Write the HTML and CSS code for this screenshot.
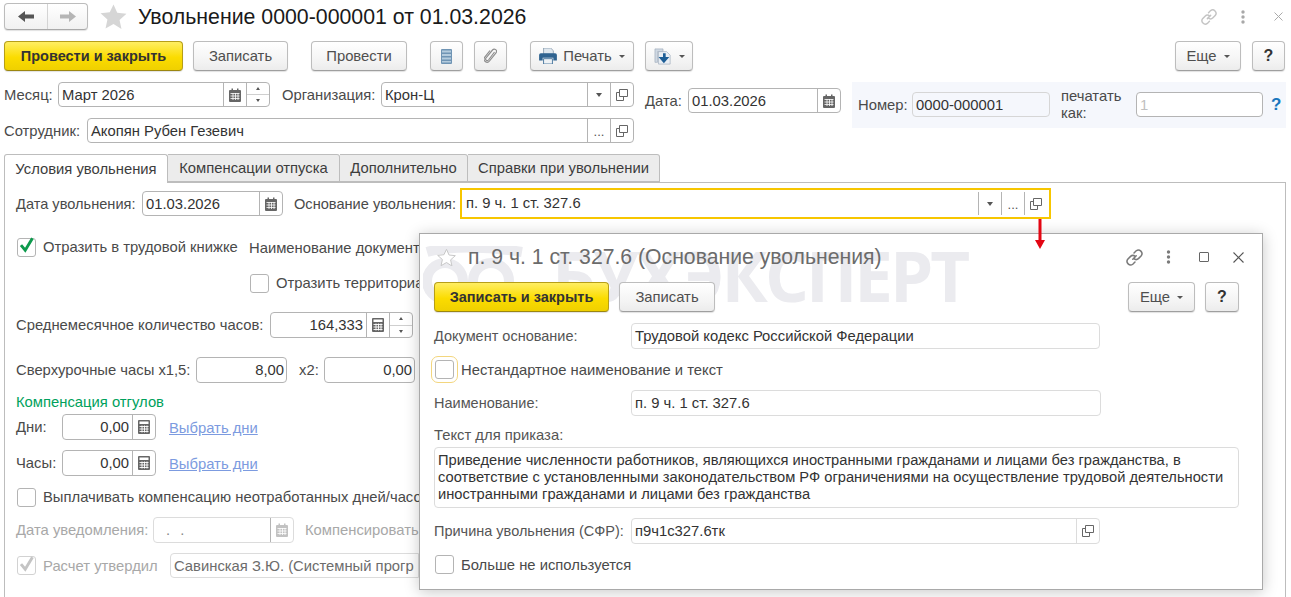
FILE: index.html
```html
<!DOCTYPE html>
<html lang="ru">
<head>
<meta charset="utf-8">
<title>Увольнение 0000-000001</title>
<link rel="stylesheet" href="styles.css">
</head>
<body>
<svg class="defs" width="0" height="0" aria-hidden="true">
  <symbol id="i-cal" viewBox="0 0 12 14"><path d="M1 2h1.5V0.5h1.5V2h4V0.5h1.5V2H11a1 1 0 0 1 1 1v10a1 1 0 0 1-1 1H1a1 1 0 0 1-1-1V3a1 1 0 0 1 1-1z" fill="currentColor"/><path d="M1.5 5.5h9M1.5 8h9M1.5 10.5h9M4 5v7M6.5 5v7M9 5v7" stroke="#fff" stroke-width=".8" fill="none"/></symbol>
  <symbol id="i-calc" viewBox="0 0 12 14"><rect width="12" height="14" rx="1" fill="currentColor"/><rect x="1.5" y="1.5" width="9" height="2.5" fill="#fff"/><path d="M1.5 6.5h9M1.5 9h9M1.5 11.5h9M4 5.5v7M6.5 5.5v7M9 5.5v7" stroke="#fff" stroke-width=".9" fill="none"/></symbol>
  <symbol id="i-open" viewBox="0 0 12 12"><path d="M3.5.5h8v7h-8z" fill="none" stroke="currentColor"/><path d="M3.5 3.5H.5v8h7V8" fill="none" stroke="currentColor"/></symbol>
  <symbol id="i-link" viewBox="0 0 20 20"><path d="M8.2 11.8l3.6-3.6M9.5 5.2l2.3-2.3a3.8 3.8 0 0 1 5.3 5.3l-2.7 2.7a3.8 3.8 0 0 1-5.3 0M10.5 14.8l-2.3 2.3a3.8 3.8 0 0 1-5.3-5.3l2.7-2.7a3.8 3.8 0 0 1 5.3 0" fill="none" stroke="currentColor" stroke-width="1.6" stroke-linecap="round"/></symbol>
  <symbol id="i-dots" viewBox="0 0 4 14"><circle cx="2" cy="2" r="1.7" fill="currentColor"/><circle cx="2" cy="7" r="1.7" fill="currentColor"/><circle cx="2" cy="12" r="1.7" fill="currentColor"/></symbol>
  <symbol id="i-check" viewBox="0 0 20 20"><path d="M3.5 9.5l5 6L17 1.5" fill="none" stroke="currentColor" stroke-width="3.4"/></symbol>
  <symbol id="i-star" viewBox="0 0 28 26"><path d="M14 .5l3.9 8.7 9.6 1-7.2 6.4 2 9.4L14 20.7l-8.3 4.8 2-9.4L.5 9.7l9.6-1z"/></symbol>
</svg>

<header class="top-bar">
  <div class="nav-box">
    <button class="nav-btn nav-btn-back"><svg width="16" height="11" viewBox="0 0 16 11"><path d="M0 5.500L7 0v3.500h9v4H7V11z" fill="#555"/></svg></button>
    <button class="nav-btn nav-btn-next"><svg width="16" height="11" viewBox="0 0 16 11"><path d="M16 5.500L9 0v3.500H0v4h9V11z" fill="#b5b5b5"/></svg></button>
  </div>
  <svg class="star-big"><use href="#i-star"/></svg>
  <h1 class="doc-title">Увольнение 0000-000001 от 01.03.2026</h1>
  <div class="win-icons">
    <svg class="ic-link"><use href="#i-link"/></svg>
    <svg class="ic-dots"><use href="#i-dots"/></svg>
    <svg class="ic-close" viewBox="0 0 9 9"><path d="M.5.5l8 8M8.500.5l-8 8" stroke="#aaa" fill="none"/></svg>
  </div>
</header>

<div class="toolbar">
  <button class="btn btn-main w-post-close">Провести и закрыть</button>
  <button class="btn w-save">Записать</button>
  <button class="btn w-post">Провести</button>
  <button class="btn btn-icon gap-23"><svg width="11" height="15" viewBox="0 0 11 15"><rect width="11" height="15" rx="1" fill="#6f94b4"/><path d="M1 1.500h9v2H1zM1 5h9v2H1zM1 8.500h9v2H1zM1 12h9v1.500H1z" fill="#b4cbdd"/></svg></button>
  <button class="btn btn-icon gap-11"><svg width="13" height="16" viewBox="0 0 13 16"><path d="M10.500 4L4.500 12a1.600 1.600 0 0 1-2.500-2L8.500 2a2.200 2.200 0 0 1 3.500 2.800L5.500 13a3 3 0 0 1-4.700-3.800L6 2.500" fill="none" stroke="#8d8d8d" stroke-width="1.200"/></svg></button>
  <button class="btn w-print gap-23">
    <svg width="18" height="16" viewBox="0 0 20 18"><path d="M5 0h8l3 3v4H5z" fill="#dfe7ee" stroke="#7a8fa3" stroke-width=".8"/><path d="M2 6h16a2 2 0 0 1 2 2v6h-4v-3H4v3H0V8a2 2 0 0 1 2-2z" fill="#2f6390"/><path d="M5 12h10v6H5z" fill="#eef2f5" stroke="#2f6390" stroke-width=".9"/></svg>
    <span>Печать</span><i class="caret"></i>
  </button>
  <button class="btn w-export gap-11">
    <svg width="18" height="17" viewBox="0 0 20 19"><path d="M1 1h9v3H4v12H1z" fill="#cfd8e2" stroke="#9aa9b8" stroke-width=".7"/><path d="M5 4h9l4 4v10H5z" fill="#e9eef4" stroke="#9aa9b8" stroke-width=".7"/><path d="M10 6h3v4h4l-6 7-6-7h5z" fill="#1d5e96"/></svg>
    <i class="caret"></i>
  </button>
  <div class="toolbar-end">
    <button class="btn w-more">Еще<i class="caret"></i></button>
    <button class="btn btn-help">?</button>
  </div>
</div>

<section class="doc-fields">
  <div class="doc-left">
    <div class="row">
      <label class="lbl w-lbl-month">Месяц:</label>
      <div class="field w-month"><span class="val">Март 2026</span><span class="fbtn"><svg class="ic-cal"><use href="#i-cal"/></svg></span><span class="spin"><i class="up"></i><i class="down"></i></span></div>
      <label class="lbl w-lbl-org">Организация:</label>
      <div class="field w-org"><span class="val">Крон-Ц</span><span class="fbtn"><i class="caret-sm"></i></span><span class="fbtn"><svg class="ic-open"><use href="#i-open"/></svg></span></div>
    </div>
    <div class="row">
      <label class="lbl w-lbl-emp">Сотрудник:</label>
      <div class="field w-emp"><span class="val">Акопян Рубен Гезевич</span><span class="fbtn dots">...</span><span class="fbtn"><svg class="ic-open"><use href="#i-open"/></svg></span></div>
    </div>
  </div>
  <div class="row date-group">
    <label class="lbl w-lbl-date">Дата:</label>
    <div class="field w-date"><span class="val">01.03.2026</span><span class="fbtn"><svg class="ic-cal"><use href="#i-cal"/></svg></span></div>
  </div>
  <div class="number-panel">
    <label class="lbl w-lbl-num">Номер:</label>
    <div class="field field-ro w-num"><span class="val">0000-000001</span></div>
    <label class="lbl lbl-wrap">печатать как:</label>
    <div class="field w-printas"><span class="val val-muted">1</span></div>
    <span class="hint">?</span>
  </div>
</section>

<nav class="tabs">
  <span class="tab tab-active w-tab1">Условия увольнения</span>
  <span class="tab w-tab2">Компенсации отпуска</span>
  <span class="tab w-tab3">Дополнительно</span>
  <span class="tab w-tab4">Справки при увольнении</span>
</nav>

<main class="tab-panel">
  <div class="row">
    <label class="lbl w-lbl-dismiss">Дата увольнения:</label>
    <div class="field w-dismiss"><span class="val">01.03.2026</span><span class="fbtn"><svg class="ic-cal"><use href="#i-cal"/></svg></span></div>
    <label class="lbl w-lbl-reason">Основание увольнения:</label>
    <div class="field field-hl w-reason"><span class="val">п. 9 ч. 1 ст. 327.6</span><span class="fbtn"><i class="caret-sm"></i></span><span class="fbtn dots">...</span><span class="fbtn"><svg class="ic-open"><use href="#i-open"/></svg></span></div>
  </div>

  <div class="row-check mt-21">
    <span class="check"><svg class="tick"><use href="#i-check"/></svg></span>
    <span class="check-lbl w-lbl-book">Отразить в трудовой книжке</span>
    <span class="lbl w-lbl-docname">Наименование документа</span>
  </div>
  <div class="row-check mt-16 indent-territory">
    <span class="check"></span>
    <span class="check-lbl">Отразить территориальные условия</span>
  </div>

  <div class="row row-26 mt-19">
    <label class="lbl w-lbl-avg">Среднемесячное количество часов:</label>
    <div class="field w-avg"><span class="val num">164,333</span><span class="fbtn"><svg class="ic-calc"><use href="#i-calc"/></svg></span><span class="spin"><i class="up"></i><i class="down"></i></span></div>
  </div>
  <div class="row row-26 mt-19">
    <label class="lbl w-lbl-over">Сверхурочные часы х1,5:</label>
    <div class="field w-over"><span class="val num">8,00</span></div>
    <label class="lbl w-lbl-x2">х2:</label>
    <div class="field w-over"><span class="val num">0,00</span></div>
  </div>

  <div class="group-title">Компенсация отгулов</div>
  <div class="row row-26 mt-4">
    <label class="lbl w-lbl-days">Дни:</label>
    <div class="field w-days"><span class="val num">0,00</span><span class="fbtn"><svg class="ic-calc"><use href="#i-calc"/></svg></span></div>
    <a class="pick" href="#">Выбрать дни</a>
  </div>
  <div class="row row-26 mt-10">
    <label class="lbl w-lbl-days">Часы:</label>
    <div class="field w-days"><span class="val num">0,00</span><span class="fbtn"><svg class="ic-calc"><use href="#i-calc"/></svg></span></div>
    <a class="pick" href="#">Выбрать дни</a>
  </div>

  <div class="row-check mt-11">
    <span class="check"></span>
    <span class="check-lbl">Выплачивать компенсацию неотработанных дней/часов</span>
  </div>

  <div class="row row-26 mt-10">
    <label class="lbl lbl-off w-lbl-notice">Дата уведомления:</label>
    <div class="field field-off w-dismiss"><span class="val val-dots">. .</span><span class="fbtn"><svg class="ic-cal ic-off"><use href="#i-cal"/></svg></span></div>
    <label class="lbl lbl-off w-lbl-comp">Компенсировать</label>
  </div>
  <div class="row mt-10">
    <span class="check check-off"><svg class="tick tick-off"><use href="#i-check"/></svg></span>
    <span class="check-lbl lbl-off w-lbl-appr">Расчет утвердил</span>
    <div class="field field-off field-ro-off w-appr"><span class="val val-clip">Савинская З.Ю. (Системный программист)</span></div>
  </div>
</main>

<svg class="arrow" width="10" height="31" viewBox="0 0 10 31"><path d="M3.500 0h3v21H10l-5 9-5-9h3.500z" fill="#e30613"/></svg>

<aside class="dialog">
  <div class="watermark" aria-hidden="true">
    <svg class="wm-owl" width="105" height="60" viewBox="0 0 105 60"><g fill="none" stroke="#ebebef" stroke-width="10"><circle cx="22" cy="35" r="18"/><circle cx="68" cy="35" r="18"/><path d="M4 6c20-6 60-6 95 0"/></g></svg>
    <span class="wm-text">БУХЭКСПЕРТ</span>
  </div>
  <div class="dlg-head">
    <svg class="star-sm"><use href="#i-star"/></svg>
    <h2 class="dlg-title">п. 9 ч. 1 ст. 327.6 (Основание увольнения)</h2>
    <div class="dlg-icons">
      <svg class="dlg-link"><use href="#i-link"/></svg>
      <svg class="dlg-dots"><use href="#i-dots"/></svg>
      <span class="dlg-max"></span>
      <svg class="dlg-close" viewBox="0 0 11 11"><path d="M.5.5l10 10M10.500.5l-10 10" stroke="#555" fill="none" stroke-width="1.100"/></svg>
    </div>
  </div>
  <div class="dlg-toolbar">
    <button class="btn btn-main w-save-close">Записать и закрыть</button>
    <button class="btn w-save-sm">Записать</button>
    <div class="toolbar-end">
      <button class="btn w-more-sm">Еще<i class="caret"></i></button>
      <button class="btn btn-help btn-help-dlg">?</button>
    </div>
  </div>
  <div class="dlg-row mt-11">
    <label class="dlg-lbl">Документ основание:</label>
    <div class="field field-light w-dlg"><span class="val">Трудовой кодекс Российской Федерации</span></div>
  </div>
  <div class="row-check row-dlg-check mt-11">
    <span class="check check-focus"></span>
    <span class="check-lbl">Нестандартное наименование и текст</span>
  </div>
  <div class="dlg-row mt-11">
    <label class="dlg-lbl">Наименование:</label>
    <div class="field field-light w-dlg-name"><span class="val">п. 9 ч. 1 ст. 327.6</span></div>
  </div>
  <div class="dlg-caption">Текст для приказа:</div>
  <div class="memo">Приведение численности работников, являющихся иностранными гражданами и лицами без гражданства, в соответствие с установленными законодательством РФ ограничениями на осуществление трудовой деятельности иностранными гражданами и лицами без гражданства</div>
  <div class="dlg-row mt-10">
    <label class="dlg-lbl">Причина увольнения (СФР):</label>
    <div class="field field-light w-dlg"><span class="val">п9ч1с327.6тк</span><span class="fbtn fbtn-light"><svg class="ic-open"><use href="#i-open"/></svg></span></div>
  </div>
  <div class="row-check row-dlg-check mt-11">
    <span class="check"></span>
    <span class="check-lbl">Больше не используется</span>
  </div>
</aside>
</body>
</html>
```
FILE: styles.css
```css
* { box-sizing: border-box; }
html, body { margin: 0; height: 597px; overflow: hidden; background: #fff; }
body { position: relative; padding-top: 3px; font: 14.800px/16px "Liberation Sans", Arial, sans-serif; color: #4a4a4a; }
.defs { position: absolute; }
button { font: inherit; color: inherit; padding: 0; }
h1, h2 { margin: 0; font-weight: 400; }

/* top bar */
.top-bar { display: flex; align-items: center; height: 27px; padding: 0 5px 0 4px; }
.nav-box { display: flex; width: 84px; height: 27px; border: 1px solid #bcbcbc; border-bottom-color: #a9a9a9; border-radius: 4px; background: linear-gradient(#fff, #f1f1f1); box-shadow: 0 1px 1px rgba(0,0,0,.12); }
.nav-btn { border: 0; background: none; display: flex; align-items: center; justify-content: center; }
.nav-btn-back { width: 42px; }
.nav-btn-next { flex: 1; border-left: 1px solid #d4d4d4; }
.star-big { width: 27px; height: 25px; margin: 0 0 0 12px; fill: #d6d6d6; }
.doc-title { margin: 0 0 0 11px; font-size: 21.300px; line-height: 26px; color: #1a1a1a; white-space: nowrap; }
.win-icons { margin-left: auto; display: flex; align-items: center; color: #c4c4c4; }
.ic-link { width: 18px; height: 18px; }
.ic-dots { width: 4px; height: 14px; margin-left: 23px; color: #a8a8a8; }
.ic-close { width: 9px; height: 9px; margin-left: 29px; margin-right: 3px; }

/* toolbars and buttons */
.toolbar { display: flex; height: 30px; margin: 11px 6px 0 4px; }
.btn { display: inline-flex; align-items: center; justify-content: center; height: 30px; border: 1px solid #bdbdbd; border-bottom-color: #9f9f9f; border-radius: 4px; background: linear-gradient(#fff, #f3f3f3 70%, #ececec); box-shadow: 0 1px 1px rgba(0,0,0,.12); color: #4f4f4f; white-space: nowrap; }
.btn-main { background: linear-gradient(#ffee62, #fbdc00 55%, #efd000); border-color: #b69e18; border-bottom-color: #9b8610; color: #333; font-size: 14.500px; font-weight: 700; }
.w-post-close { width: 179px; }
.w-save { width: 95px; margin-left: 10px; }
.w-post { width: 96px; margin-left: 23px; }
.btn-icon { width: 33px; }
.gap-23 { margin-left: 23px; }
.gap-11 { margin-left: 11px; }
.w-print { width: 104px; }
.w-print span { margin-left: 6px; }
.w-export { width: 48px; }
.caret { display: inline-block; margin-left: 7px; border: 3px solid transparent; border-top: 3px solid #555; border-bottom: 0; }
.toolbar-end { display: flex; margin-left: auto; }
.w-more { width: 66px; }
.btn-help { width: 33px; margin-left: 11px; font-weight: 700; font-size: 16px; color: #333; }
.btn-help-dlg { width: 34px; margin-left: 10px; }

/* rows and labels */
.row { display: flex; align-items: center; height: 25px; }
.row-26 { height: 26px; }
.lbl { display: block; flex: none; white-space: nowrap; }
.doc-fields { display: flex; margin: 11px 0 0 4px; align-items: flex-start; }
.doc-left { display: flex; flex-direction: column; gap: 11px; }
.date-group { margin: 6px 0 0 11px; }
.w-lbl-month { width: 54px; }
.w-month { width: 212px; }
.w-lbl-org { width: 99px; margin-left: 12px; }
.w-org { width: 253px; }
.w-lbl-emp { width: 83px; }
.w-emp { width: 547px; }
.w-lbl-date { width: 43px; }
.w-date { width: 153px; }

.number-panel { display: flex; align-items: center; width: 434px; height: 46px; margin-left: 11px; padding: 0 0 1px 6px; background: #f5f7fc; }
.w-lbl-num { width: 54px; }
.w-num { width: 138px; }
.lbl-wrap { width: 75px; margin-left: 11px; white-space: normal; line-height: 17px; }
.w-printas { width: 127px; }
.hint { margin-left: 8px; color: #1976bd; font-size: 17px; font-weight: 700; }

/* fields */
.field { display: flex; flex: none; height: 25px; border: 1px solid #b4b4b4; border-radius: 4px; background: #fff; }
.row-26 .field { height: 26px; }
.val { flex: 1; min-width: 0; padding: 0 3px; line-height: 24px; color: #333; white-space: nowrap; overflow: hidden; }
.num { text-align: right; padding-right: 3px; }
.val-muted { color: #c0c0c0; }
.fbtn { flex: none; width: 23px; display: flex; align-items: center; justify-content: center; border-left: 1px solid #b4b4b4; color: #555; }
.dots { align-items: flex-end; padding-bottom: 4px; line-height: 12px; font-size: 13px; }
.spin { flex: none; width: 23px; display: flex; flex-direction: column; border-left: 1px solid #b4b4b4; }
.spin i { flex: 1; display: flex; align-items: center; justify-content: center; }
.spin .up { border-bottom: 1px solid #cfcfcf; }
.spin i::before { content: ""; border: 2.500px solid transparent; }
.spin .up::before { border-bottom: 3px solid #555; border-top: 0; }
.spin .down::before { border-top: 3px solid #555; border-bottom: 0; }
.caret-sm { border: 3.500px solid transparent; border-top: 4px solid #555; border-bottom: 0; }
.ic-cal { width: 12px; height: 14px; color: #666; }
.ic-calc { width: 12px; height: 14px; color: #666; }
.ic-off { color: #c2c2c2; }
.ic-open { width: 12px; height: 12px; color: #666; }
.field-ro { background: #f5f7fc; border-color: #d6d6d6; }
.field-light { border-color: #dcdcdc; background: transparent; }
.field-off { border-color: #dcdcdc; }

/* tabs */
.tabs { display: flex; height: 28px; margin: 11px 0 0 4px; position: relative; z-index: 1; }
.tab { display: flex; align-items: center; justify-content: center; height: 28px; border: 1px solid #bdbdbd; border-left: 0; border-radius: 0 3px 0 0; background: #ececec; color: #3d3d3d; white-space: nowrap; }
.tab-active { height: 29px; border-left: 1px solid #bdbdbd; border-bottom: 0; border-radius: 3px 3px 0 0; background: #fff; }
.w-tab1 { width: 164px; }
.w-tab2 { width: 172px; }
.w-tab3 { width: 128px; }
.w-tab4 { width: 192px; }

/* tab panel */
.tab-panel { height: 420px; margin: 0 5px 0 4px; padding: 8px 0 0 11px; border: 1px solid #bdbdbd; border-bottom: 0; }
.w-lbl-dismiss { width: 126px; font-size: 14.600px; }
.w-dismiss { width: 141px; }
.w-lbl-reason { width: 166px; margin-left: 11px; font-size: 14.600px; }
.w-reason { width: 591px; }
.field-hl { height: 31px; border: 2px solid #f7c600; border-radius: 0; padding: 2px 0; }
.field-hl .fbtn { width: 23px; }
.field-hl .val { line-height: 22px; padding-left: 4px; }
.field-hl .fbtn:last-child { width: 25px; padding-right: 2px; }

.row-check { display: flex; align-items: center; height: 20px; padding-left: 1px; }
.check { display: flex; align-items: center; justify-content: center; flex: none; width: 19px; height: 19px; border: 1px solid #b4b4b4; border-radius: 3px; background: #fff; }
.check-lbl { margin-left: 7px; white-space: nowrap; }
.tick { width: 17px; height: 17px; color: #0e9a4d; margin-top: -3px; }
.tick-off { color: #c4c4c4; }
.check-off { border-color: #d2d2d2; margin-left: 1px; }
.w-lbl-book { flex: none; width: 195px; }
.w-lbl-docname { margin-left: 11px; margin-top: 2px; }
.indent-territory { padding-left: 234px; }

.mt-4 { margin-top: 4px; }
.mt-10 { margin-top: 10px; }
.mt-11 { margin-top: 11px; }
.mt-16 { margin-top: 16px; }
.mt-19 { margin-top: 19px; }
.mt-21 { margin-top: 21px; }

.w-lbl-avg { width: 254px; }
.w-avg { width: 143px; }
.w-lbl-over { width: 180px; }
.w-over { width: 91px; }
.w-over .num { padding-right: 2px; }
.w-lbl-x2 { width: 25px; margin-left: 12px; }
.group-title { height: 16px; margin-top: 11px; color: #00a15c; }
.w-lbl-days { width: 46px; }
.w-days { width: 94px; }
.pick { margin: 2px 0 0 13px; color: #7c9be0; text-decoration: underline; }
.lbl-off { color: #a8a8a8; }
.w-lbl-notice { width: 137px; }
.val-dots { padding-left: 12px; letter-spacing: 3px; color: #8a8a8a; }
.w-lbl-comp { margin-left: 11px; }
.w-lbl-appr { flex: none; width: 127px; }
.w-appr { width: 249px; }
.field-ro-off { background: #fff; border-radius: 4px 0 0 4px; }
.val-clip { color: #6c6c6c; margin-right: 4px; }

/* red arrow */
.arrow { position: absolute; left: 1035px; top: 219px; z-index: 3; }

/* dialog window */
.dialog { position: absolute; left: 419px; top: 233px; z-index: 2; width: 844px; height: 357px; padding: 0 23px 0 14px; border: 1px solid #a9a9a9; background: #fff; box-shadow: 0 2px 14px rgba(0,0,0,.22); }
.watermark { position: absolute; left: 3px; top: 10px; display: flex; align-items: flex-start; pointer-events: none; }
.wm-owl { margin-top: 2px; }
.wm-text { margin-left: 24px; font: 700 69px/62px "Open Sans", "Liberation Sans", sans-serif; letter-spacing: -3px; color: #ebebef; white-space: nowrap; }
.dlg-head, .dlg-toolbar, .dlg-row, .dialog .row-check, .dlg-caption, .memo { position: relative; }
.dlg-head { display: flex; align-items: center; height: 46px; margin-right: -23px; padding-left: 3px; }
.star-sm { width: 19px; height: 17px; fill: #fff; stroke: #c6c6c6; stroke-width: 1.500; }
.dlg-title { margin-left: 12px; font-size: 21.200px; line-height: 26px; color: #6b6b6b; white-space: nowrap; }
.dlg-icons { display: flex; align-items: center; margin-left: auto; padding-right: 18px; color: #7a7a7a; }
.dlg-link { width: 19px; height: 19px; }
.dlg-dots { width: 5px; height: 14px; margin-left: 22px; }
.dlg-max { width: 10px; height: 10px; margin-left: 28px; border: 1.500px solid #666; border-radius: 1px; }
.dlg-close { width: 11px; height: 11px; margin-left: 24px; }
.dlg-toolbar { display: flex; height: 30px; margin-top: 2px; }
.w-save-close { width: 175px; }
.w-save-sm { width: 96px; margin-left: 10px; }
.w-more-sm { width: 67px; }
.dlg-row { display: flex; align-items: center; height: 26px; }
.dlg-row .field { height: 26px; }
.dlg-lbl { width: 197px; flex: none; font-size: 14.500px; white-space: nowrap; color: #555; }
.w-dlg { width: 469px; }
.w-dlg-name { width: 470px; }
.fbtn-light { border-left-color: #dcdcdc; }
.row-dlg-check { height: 19px; }
.check-focus { outline: 1px solid #f3d67e; outline-offset: 3px; }
.dlg-caption { height: 16px; margin-top: 11px; color: #555; }
.memo { width: 805px; height: 61px; margin-top: 4px; padding: 4px 3px; border: 1px solid #dcdcdc; border-radius: 4px; font-size: 14.700px; line-height: 17px; color: #333; }
```
